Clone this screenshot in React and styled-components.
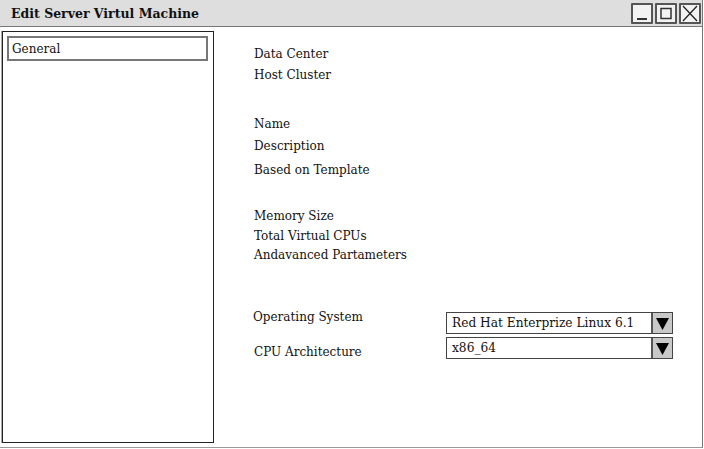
import React from "react";
import styled, { createGlobalStyle } from "styled-components";

const Global = createGlobalStyle`
  *, *::before, *::after {
    box-sizing: border-box;
  }
  html, body {
    margin: 0;
    padding: 0;
    background: #fff;
  }
  body {
    font-family: "DejaVu Serif", "Liberation Serif", serif;
    font-size: 12px;
    color: #111;
  }
`;

const Window = styled.div`
  width: 703px;
  height: 448px;
  border-right: 1px solid #777;
  border-bottom: 1px solid #999;
  display: flex;
  flex-direction: column;
  overflow: hidden;
`;

const TitleBar = styled.div`
  height: 27px;
  flex: none;
  background: #dedede;
  border-bottom: 1px solid #777;
  display: flex;
  align-items: center;
  justify-content: space-between;
  padding: 0 1px 0 11px;
`;

const Title = styled.div`
  font-weight: bold;
  font-size: 12.5px;
`;

const Controls = styled.div`
  display: flex;
  gap: 2px;
`;

const CtrlButton = styled.div`
  width: 22px;
  height: 21px;
  border: 2px solid #555;
  border-radius: 1px;
  background: #f2f2f2;
  display: flex;
  align-items: center;
  justify-content: center;
`;

const Body = styled.div`
  flex: 1;
  display: flex;
  min-height: 0;
`;

const Sidebar = styled.div`
  margin: 4px 0 0 2px;
  width: 212px;
  height: 412px;
  border: 1px solid #222;
  box-shadow: -1px 0 0 #aaa;
  padding: 4px;
  flex: none;
`;

const Tab = styled.div`
  width: 201px;
  height: 25px;
  border: 2px solid #777;
  padding-left: 3px;
  display: flex;
  align-items: center;
`;

const Main = styled.div`
  flex: 1;
  padding: 17px 0 0 40px;
  display: flex;
  flex-direction: column;
`;

const Label = styled.div`
  height: ${(p) => p.$h || 20}px;
  line-height: 20px;
  margin-top: ${(p) => p.$mt || 0}px;
  margin-left: ${(p) => p.$ml || 0}px;
  white-space: nowrap;
`;

const SelectGrid = styled.div`
  display: grid;
  grid-template-columns: 193px 227px;
  margin-top: 42px;
  margin-left: -1px;
`;

const LabelCol = styled.div`
  display: flex;
  flex-direction: column;
`;

const SelectCol = styled.div`
  display: flex;
  flex-direction: column;
  gap: 3px;
  padding-top: 5px;
`;

const Select = styled.div`
  height: 22px;
  border: 1px solid #444;
  display: flex;
  align-items: stretch;
`;

const SelectText = styled.div`
  flex: 1;
  padding-left: 5px;
  font-size: 12.2px;
  line-height: 20px;
  white-space: nowrap;
`;

const Arrow = styled.div`
  width: 21px;
  background: #c8c8c8;
  border-left: 2px solid #555;
  display: flex;
  align-items: center;
  justify-content: center;
`;

const Dropdown = ({ value }) => (
  <Select>
    <SelectText>{value}</SelectText>
    <Arrow>
      <svg width="13" height="13" viewBox="0 0 13 13">
        <polygon points="0,1 13,1 6.5,13" fill="#000" />
      </svg>
    </Arrow>
  </Select>
);

export default function App() {
  return (
    <>
      <Global />
      <Window>
        <TitleBar>
          <Title>Edit Server Virtul Machine</Title>
          <Controls>
            <CtrlButton>
              <svg width="18" height="17" viewBox="0 0 18 17">
                <line x1="4" y1="14" x2="14" y2="14" stroke="#333" strokeWidth="2" />
              </svg>
            </CtrlButton>
            <CtrlButton>
              <svg width="18" height="17" viewBox="0 0 18 17">
                <rect x="4" y="3.5" width="10" height="10" fill="none" stroke="#333" strokeWidth="1.5" />
              </svg>
            </CtrlButton>
            <CtrlButton>
              <svg width="18" height="17" viewBox="0 0 18 17">
                <path d="M2 1 L16 16 M16 1 L2 16" stroke="#222" strokeWidth="1.3" />
              </svg>
            </CtrlButton>
          </Controls>
        </TitleBar>
        <Body>
          <Sidebar>
            <Tab>General</Tab>
          </Sidebar>
          <Main>
            <Label $h={21}>Data Center</Label>
            <Label>Host Cluster</Label>
            <Label $mt={29} $h={22}>Name</Label>
            <Label $h={24}>Description</Label>
            <Label>Based on Template</Label>
            <Label $mt={26}>Memory Size</Label>
            <Label $h={19}>Total Virtual CPUs</Label>
            <Label>Andavanced Partameters</Label>
            <SelectGrid>
              <LabelCol>
                <Label $h={35}>Operating System</Label>
                <Label $ml={1}>CPU Architecture</Label>
              </LabelCol>
              <SelectCol>
                <Dropdown value="Red Hat Enterprize Linux 6.1" />
                <Dropdown value="x86_64" />
              </SelectCol>
            </SelectGrid>
          </Main>
        </Body>
      </Window>
    </>
  );
}
